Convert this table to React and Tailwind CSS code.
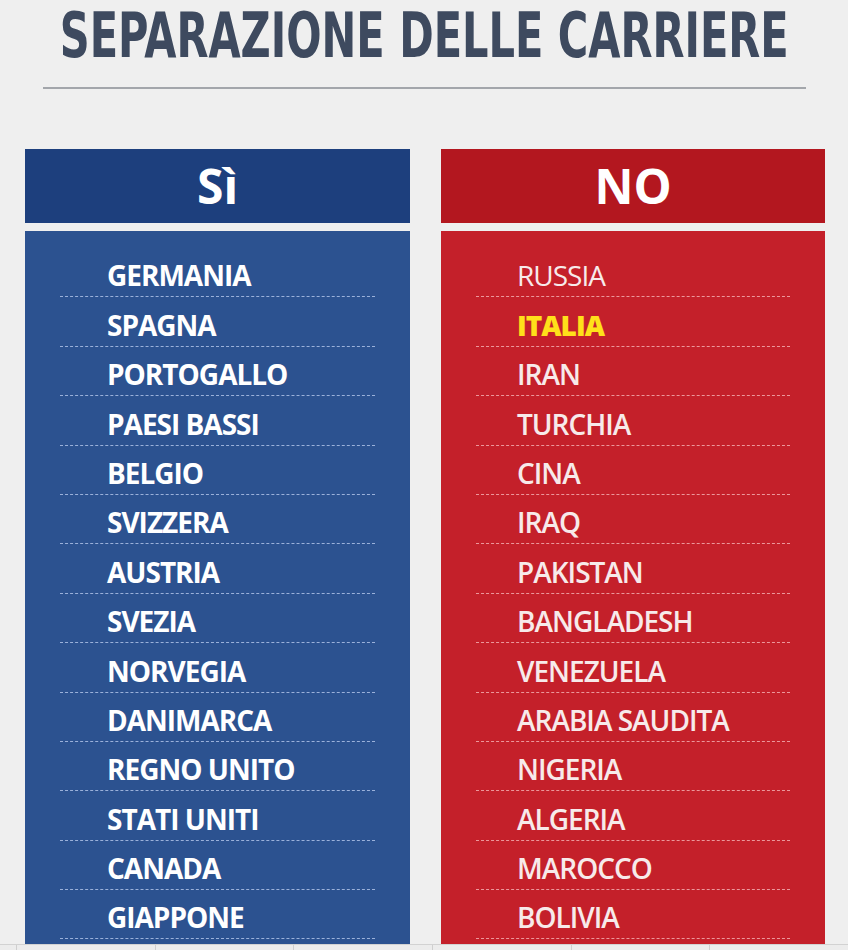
import React from 'react';

const SI = [
  'GERMANIA', 'SPAGNA', 'PORTOGALLO', 'PAESI BASSI', 'BELGIO', 'SVIZZERA', 'AUSTRIA',
  'SVEZIA', 'NORVEGIA', 'DANIMARCA', 'REGNO UNITO', 'STATI UNITI', 'CANADA', 'GIAPPONE',
];

const NO = [
  'RUSSIA', 'ITALIA', 'IRAN', 'TURCHIA', 'CINA', 'IRAQ', 'PAKISTAN',
  'BANGLADESH', 'VENEZUELA', 'ARABIA SAUDITA', 'NIGERIA', 'ALGERIA', 'MAROCCO', 'BOLIVIA',
];

const Row = ({ name, side }) => {
  const isItaly = name === 'ITALIA';
  return (
    <div
      className={`h-[49.4px] flex items-end pb-[6px] border-b border-dashed ${
        side === 'si' ? 'pl-[47px] border-[#9bb1da]' : 'pl-[41px] border-[#ec979b]'
      }`}
    >
      <span
        className={`text-[28px] leading-[30px] tracking-[-1px] ${
          isItaly
            ? 'text-[#ffe01a] font-extrabold'
            : side === 'si'
            ? 'text-white font-bold'
            : name === 'RUSSIA'
            ? 'text-[#f7eaea] font-medium'
            : 'text-[#f7eaea] font-semibold'
        }`}
      >
        {name}
      </span>
    </div>
  );
};

const Column = ({ label, items, side }) => {
  const blue = side === 'si';
  return (
    <div className="flex flex-col">
      <div
        className={`h-[74px] flex items-center justify-center ${
          blue ? 'bg-[#1d3f7d]' : 'bg-[#b3171f]'
        }`}
      >
        <span className="text-white text-[48px] font-bold leading-none">{label}</span>
      </div>
      <div
        className={`mt-[8px] flex-1 pt-[17px] px-[35px] ${
          blue ? 'bg-[#2c5290]' : 'bg-[#c4202a]'
        }`}
      >
        {items.map((n) => (
          <Row key={n} name={n} side={side} />
        ))}
      </div>
    </div>
  );
};

export default function App() {
  return (
    <div
      className="w-[848px] h-[950px] overflow-hidden bg-[#efefef] flex flex-col"
      style={{ fontFamily: '"Open Sans", "Noto Sans", sans-serif' }}
    >
      <div className="mt-[5px] h-[62px] flex justify-center">
        <h1
          className="inline-block scale-x-[0.745] text-[62px] leading-none font-bold text-[#3e4a5f] whitespace-nowrap"
          style={{ fontFamily: '"DejaVu Sans Condensed", "DejaVu Sans", sans-serif' }}
        >
          SEPARAZIONE DELLE CARRIERE
        </h1>
      </div>
      <div className="mt-[20px] mx-[43px] w-[763px] h-[2px] bg-[#a3a6ab]" />
      <div className="mt-[60px] flex-1 grid grid-cols-[385px_384px] gap-[31px] pl-[25px]">
        <Column label="Sì" items={SI} side="si" />
        <Column label="NO" items={NO} side="no" />
      </div>
      <div className="h-[6px] bg-[#ececec] border-t border-[#d2d2d2] flex pl-[16px]">
        {[0, 1, 2, 3, 4, 5].map((i) => (
          <div key={i} className="w-[156px] border-l border-[#cfcfcf]" />
        ))}
      </div>
    </div>
  );
}
